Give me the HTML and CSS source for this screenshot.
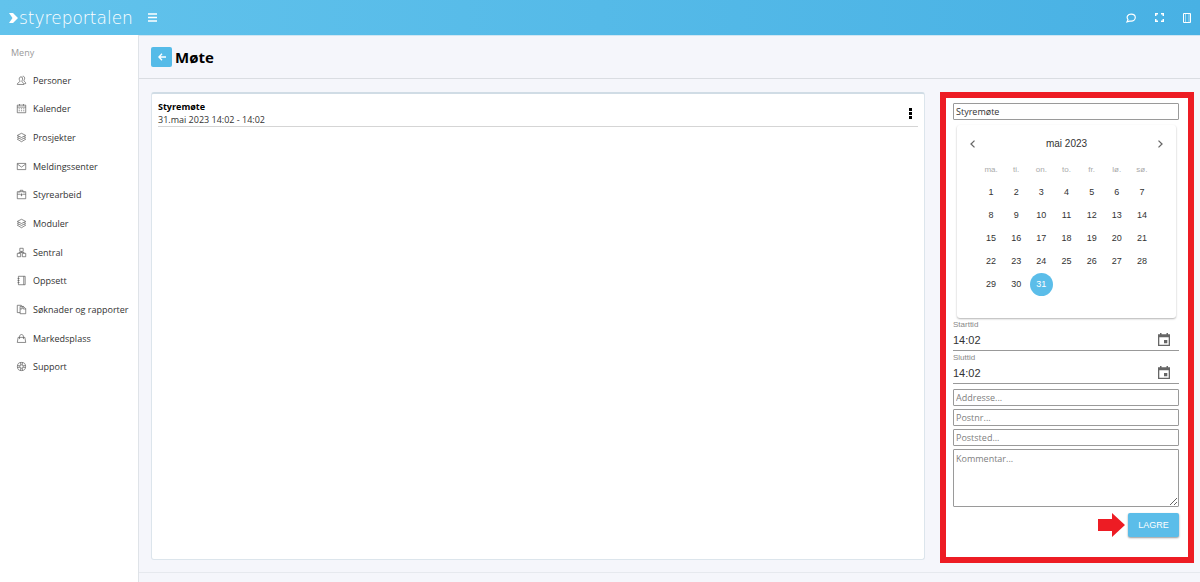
FILE: index.html
```html
<!DOCTYPE html>
<html lang="no">
<head>
    <meta charset="UTF-8">
    <meta name="viewport" content="width=device-width, initial-scale=1.0">
    <title>Styreportalen - Møte</title>
    <link rel="stylesheet" href="styles.css">
</head>
<body>
    <header class="topbar">
        <a class="logo" href="#">
            <svg width="9" height="12" viewBox="0 0 9 12"><path d="M0 1h4l5 5-5 5H0l3.500-5z" fill="#fff"/></svg>
            <span>styreportalen</span>
        </a>
        <button class="icon-btn" type="button" aria-label="Meny">
            <svg width="9" height="9" viewBox="0 0 9 9" stroke="#fff" stroke-width="1.400"><path d="M0 1h9M0 4.500h9M0 8h9"/></svg>
        </button>
        <div class="topbar-actions">
            <button class="icon-btn" type="button" aria-label="Meldinger">
                <svg width="10" height="10" viewBox="0 0 11 11" fill="none" stroke="#fff" stroke-width="1.300"><path d="M1 9.800l1.200-2.500C0 4.200 2 1.300 5.700 1.300c2.700 0 4.500 1.600 4.500 3.700S8.300 8.900 5.700 8.900H4z"/></svg>
            </button>
            <button class="icon-btn" type="button" aria-label="Fullskjerm">
                <svg width="9" height="9" viewBox="0 0 9 9" fill="none" stroke="#fff" stroke-width="1.500"><path d="M.7 3V.7H3M6 .7h2.300V3M8.300 6v2.300H6M3 8.300H.7V6"/></svg>
            </button>
            <button class="icon-btn" type="button" aria-label="Sidepanel">
                <svg width="8" height="10" viewBox="0 0 8 10" fill="none" stroke="#fff"><path d="M.5.5h7v9h-7z"/><path d="M2.500.5v9M6 .5v9" opacity=".5"/></svg>
            </button>
        </div>
    </header>

    <div class="layout">
        <nav class="sidebar">
            <h2 class="menu-title">Meny</h2>
            <ul class="menu">
                <li><a href="#"><svg class="icon" viewBox="0 0 16 16"><path d="M10 .5c2.500-.3 4 1.600 3.500 4.500-.2 1.300-1.200 2.200-1.200 3.500 0 1.200 3.200 1.500 3.200 5H13M9 2C6 .5 3.500 2.500 4 6c.2 1.500 1.300 2.300 1.300 3.500 0 1.500-4.300 1.500-4.800 5.500h12c-.5-4-4-4-4-5.500 0-1.200 1.200-2 1.300-3.500C10 4 9.800 2.800 9 2z"/></svg>Personer</a></li>
                <li><a href="#"><svg class="icon" viewBox="0 0 16 16"><path d="M.5 2h15v13.500H.5zM.5 5.500h15M4.500 0v3M11.500 0v3M3 8.500h2M7 8.500h2M11 8.500h2M3 12h2M7 12h2M11 12h2"/></svg>Kalender</a></li>
                <li><a href="#"><svg class="icon" viewBox="0 0 16 16"><path d="M8 .5l7.500 3.800L8 8 .5 4.300zM3 6L.5 7.500 8 11.500l7.500-4L13 6M3 9.500L.5 11 8 15.500l7.500-4.500L13 9.500"/></svg>Prosjekter</a></li>
                <li><a href="#"><svg class="icon" viewBox="0 0 16 16"><path d="M.5 2.500h15v11H.5zM.5 3.500L8 9l7.500-5.500"/></svg>Meldingssenter</a></li>
                <li><a href="#"><svg class="icon" viewBox="0 0 16 16"><path d="M.5 3h15v12.500H.5zM5.500 3V.5h5V3M.5 7.500H6M10 7.500h5.500M8 6v5M6 8.500h4M3.500 3v2M12.500 3v2"/></svg>Styrearbeid</a></li>
                <li><a href="#"><svg class="icon" viewBox="0 0 16 16"><path d="M8 .5l7.500 3.800L8 8 .5 4.300zM3 6L.5 7.500 8 11.500l7.500-4L13 6M3 9.500L.5 11 8 15.500l7.500-4.500L13 9.500"/></svg>Moduler</a></li>
                <li><a href="#"><svg class="icon" viewBox="0 0 16 16"><path d="M5 .5h6V6H5zM.5 9.500h6v6h-6zM9.500 9.500h6v6h-6zM8 6v2M3.500 9.500V8h9v1.500"/></svg>Sentral</a></li>
                <li><a href="#"><svg class="icon" viewBox="0 0 16 16"><path d="M2.500.5h12v15h-12zM12 .5v15M1 4.500h3.500M1 8h3.500M1 11.500h3.500"/></svg>Oppsett</a></li>
                <li><a href="#"><svg class="icon" viewBox="0 0 16 16"><path d="M5.500 13.500h-5V.5h7l2 2M5.500 2.500h6l4 4v9h-10zM11 2.500V7h4.500M5.500 7H9V3"/></svg>Søknader og rapporter</a></li>
                <li><a href="#"><svg class="icon" viewBox="0 0 16 16"><path d="M2 6h12l1.500 9H.5zM4.500 9V5c0-5.500 7-5.500 7 0v4"/></svg>Markedsplass</a></li>
                <li><a href="#"><svg class="icon" viewBox="0 0 16 16"><circle cx="8" cy="8" r="7.300"/><circle cx="8" cy="8" r="3"/><path d="M6.500 1v4M9.500 1v4M6.500 11v4M9.500 11v4M1 6.500h4M1 9.500h4M11 6.500h4M11 9.500h4"/></svg>Support</a></li>
            </ul>
        </nav>

        <main class="main">
            <div class="page-header">
                <a class="back-btn" href="#" aria-label="Tilbake">
                    <svg width="8" height="8" viewBox="0 0 8 8" fill="none" stroke="#fff" stroke-width="1.300"><path d="M8 4H1M4 .8L.9 4 4 7.200"/></svg>
                </a>
                <h1>Møte</h1>
            </div>

            <div class="content">
                <section class="card">
                    <div class="meeting">
                        <div>
                            <h3>Styremøte</h3>
                            <p>31.mai 2023 14:02 - 14:02</p>
                        </div>
                        <button class="icon-btn" type="button" aria-label="Valg">
                            <svg width="3" height="11" viewBox="0 0 3 11"><path d="M0 0h3v3H0zM0 4h3v3H0zM0 8h3v3H0z"/></svg>
                        </button>
                    </div>
                </section>

                <form class="panel">
                    <input class="field" type="text" value="Styremøte" aria-label="Tittel">

                    <div class="calendar">
                        <div class="calendar-header">
                            <button class="icon-btn" type="button" aria-label="Forrige måned">
                                <svg width="5" height="8" viewBox="0 0 5 8" fill="none" stroke="#666" stroke-width="1.300"><path d="M4.500.6L1 4l3.500 3.400"/></svg>
                            </button>
                            <span>mai 2023</span>
                            <button class="icon-btn" type="button" aria-label="Neste måned">
                                <svg width="5" height="8" viewBox="0 0 5 8" fill="none" stroke="#666" stroke-width="1.300"><path d="M.5.6L4 4 .5 7.400"/></svg>
                            </button>
                        </div>
                        <table class="days">
                            <thead>
                                <tr><th>ma.</th><th>ti.</th><th>on.</th><th>to.</th><th>fr.</th><th>lø.</th><th>sø.</th></tr>
                            </thead>
                            <tbody>
                                <tr><td>1</td><td>2</td><td>3</td><td>4</td><td>5</td><td>6</td><td>7</td></tr>
                                <tr><td>8</td><td>9</td><td>10</td><td>11</td><td>12</td><td>13</td><td>14</td></tr>
                                <tr><td>15</td><td>16</td><td>17</td><td>18</td><td>19</td><td>20</td><td>21</td></tr>
                                <tr><td>22</td><td>23</td><td>24</td><td>25</td><td>26</td><td>27</td><td>28</td></tr>
                                <tr><td>29</td><td>30</td><td><span class="selected">31</span></td><td></td><td></td><td></td><td></td></tr>
                            </tbody>
                        </table>
                    </div>

                    <div class="time-group">
                        <label for="start">Starttid</label>
                        <div class="time-row">
                            <input type="text" id="start" value="14:02">
                            <button class="icon-btn" type="button" aria-label="Velg starttid">
                                <svg width="12" height="13" viewBox="0 0 12 13"><path d="M2 0h1.500v1.300h5V0H10v1.300h2V13H0V1.300h2zM1.300 4.300v7.400h9.400V4.300zM6 7h3.300v3.300H6z" fill="#666" fill-rule="evenodd"/></svg>
                            </button>
                        </div>
                    </div>
                    <div class="time-group">
                        <label for="end">Sluttid</label>
                        <div class="time-row">
                            <input type="text" id="end" value="14:02">
                            <button class="icon-btn" type="button" aria-label="Velg sluttid">
                                <svg width="12" height="13" viewBox="0 0 12 13"><path d="M2 0h1.500v1.300h5V0H10v1.300h2V13H0V1.300h2zM1.300 4.300v7.400h9.400V4.300zM6 7h3.300v3.300H6z" fill="#666" fill-rule="evenodd"/></svg>
                            </button>
                        </div>
                    </div>

                    <div class="address">
                        <input class="field" type="text" placeholder="Addresse..." aria-label="Addresse">
                        <input class="field" type="text" placeholder="Postnr..." aria-label="Postnr">
                        <input class="field" type="text" placeholder="Poststed..." aria-label="Poststed">
                        <textarea class="field comment" placeholder="Kommentar..." aria-label="Kommentar"></textarea>
                    </div>

                    <div class="form-actions">
                        <svg width="27" height="24" viewBox="0 0 27 24"><path d="M0 6h14V0l13 12-13 12v-6H0z" fill="#ed1c24"/></svg>
                        <button class="save-btn" type="submit">LAGRE</button>
                    </div>
                </form>
            </div>

            <footer class="footer"></footer>
        </main>
    </div>
</body>
</html>
```
FILE: styles.css
```css
* {
    margin: 0;
    padding: 0;
    box-sizing: border-box;
}

body {
    min-height: 100vh;
    display: flex;
    flex-direction: column;
    background: #f5f6fb;
    color: #333;
    font-family: 'Open Sans', sans-serif;
    font-size: 9px;
    line-height: 13px;
}

a {
    color: inherit;
    text-decoration: none;
}

svg {
    display: block;
}

input,
textarea,
button {
    font: inherit;
    color: inherit;
}

.icon-btn {
    border: none;
    background: none;
    cursor: pointer;
}

/* Top bar */
.topbar {
    height: 35px;
    padding: 0 9px;
    display: flex;
    align-items: center;
    background: linear-gradient(to right, #62c3ec, #48b1e4);
}

.logo {
    width: 139px;
    display: flex;
    align-items: center;
    gap: 1px;
    color: #fff;
    font-family: 'DejaVu Sans', sans-serif;
    font-weight: 200;
    font-size: 17px;
    line-height: 20px;
}

.topbar-actions {
    margin-left: auto;
    display: flex;
    align-items: center;
    gap: 19px;
}

/* Sidebar */
.layout {
    flex: 1;
    display: flex;
}

.sidebar {
    width: 139px;
    flex-shrink: 0;
    padding-top: 11px;
    background: #fff;
    border-right: 1px solid #dfe3e8;
}

.menu-title {
    padding-left: 11px;
    margin-bottom: 7px;
    color: #999;
    font-size: 9px;
    font-weight: 400;
}

.menu {
    height: 315px;
    display: grid;
    grid-auto-rows: 1fr;
    list-style: none;
}

.menu a {
    height: 100%;
    padding-left: 17px;
    display: flex;
    align-items: center;
    gap: 7px;
}

.icon {
    width: 9px;
    height: 9px;
    overflow: visible;
    fill: none;
    stroke: #555;
    stroke-width: 1.2;
}

/* Page */
.main {
    flex: 1;
    min-width: 0;
    border-top: 1px solid #cfe6f3;
}

.page-header {
    height: 43px;
    padding: 0 0 1px 12px;
    display: flex;
    align-items: center;
    gap: 3px;
    border-bottom: 1px solid #dadde2;
}

.page-header h1 {
    color: #000;
    font-size: 15px;
    line-height: 20px;
}

.back-btn {
    width: 21px;
    height: 20px;
    display: grid;
    place-items: center;
    background: #55bbe8;
    border-radius: 2px;
}

.content {
    padding: 13px 6px 9px 12px;
    display: flex;
    gap: 15px;
}

.card {
    flex: 1;
    margin-bottom: 3px;
    padding: 6px;
    background: #fff;
    border: 1px solid #dce5ec;
    border-top: 2px solid #d0dce5;
    border-radius: 3px;
}

.meeting {
    padding-right: 6px;
    display: flex;
    align-items: center;
    justify-content: space-between;
    border-bottom: 1px solid #d5d5d5;
}

.meeting h3 {
    color: #000;
    font-size: 9px;
}

.footer {
    border-top: 1px solid #e6e9ee;
}

/* Meeting form */
.panel {
    width: 254px;
    padding: 5px 9px 20px 7px;
    background: #fff;
    border: 6px solid #ed1c24;
}

.field {
    display: block;
    width: 100%;
    height: 17px;
    padding: 0 2px;
    background: #fff;
    border: 1px solid #9a9a9a;
    border-radius: 1px;
    font-size: 9px;
}

.field::placeholder {
    color: #808080;
}

.calendar {
    height: 193px;
    margin: 5px 3px 0 4px;
    padding: 12px 13px;
    border-radius: 3px;
    box-shadow: 0 1px 2px rgba(0, 0, 0, 0.3);
    font-family: 'Liberation Sans', sans-serif;
}

.calendar-header {
    display: flex;
    align-items: center;
    justify-content: space-between;
    font-size: 10px;
    line-height: 14px;
}

.days {
    width: 176px;
    margin: 6px auto 0;
    table-layout: fixed;
    border-collapse: collapse;
    text-align: center;
}

.days th {
    height: 24px;
    color: #aaa;
    font-size: 8px;
    font-weight: 400;
}

.days td {
    height: 23px;
    font-size: 9px;
}

.selected {
    width: 23px;
    height: 23px;
    margin: 0 auto;
    display: grid;
    place-items: center;
    background: #5bbde9;
    border-radius: 50%;
    color: #fff;
}

.time-group {
    height: 33px;
    border-bottom: 1px solid #999;
    font-family: 'Liberation Sans', sans-serif;
}

.time-group label {
    display: block;
    color: #888;
    font-size: 8px;
    line-height: 13px;
}

.time-row {
    padding-right: 9px;
    display: flex;
    align-items: center;
    justify-content: space-between;
}

.time-row input {
    width: 150px;
    height: 17px;
    border: none;
    outline: none;
    font-size: 11px;
}

.address {
    margin-top: 5px;
    display: grid;
    gap: 3px;
}

.comment {
    height: 58px;
    padding: 2px;
    resize: vertical;
}

.form-actions {
    margin-top: 6px;
    display: flex;
    align-items: center;
    justify-content: flex-end;
    gap: 3px;
}

.save-btn {
    width: 51px;
    height: 24px;
    background: #5bbde9;
    border: none;
    border-radius: 2px;
    box-shadow: 0 1px 2px rgba(0, 0, 0, 0.4);
    color: #fff;
    font-family: 'Liberation Sans', sans-serif;
    font-size: 9px;
    cursor: pointer;
}
```
